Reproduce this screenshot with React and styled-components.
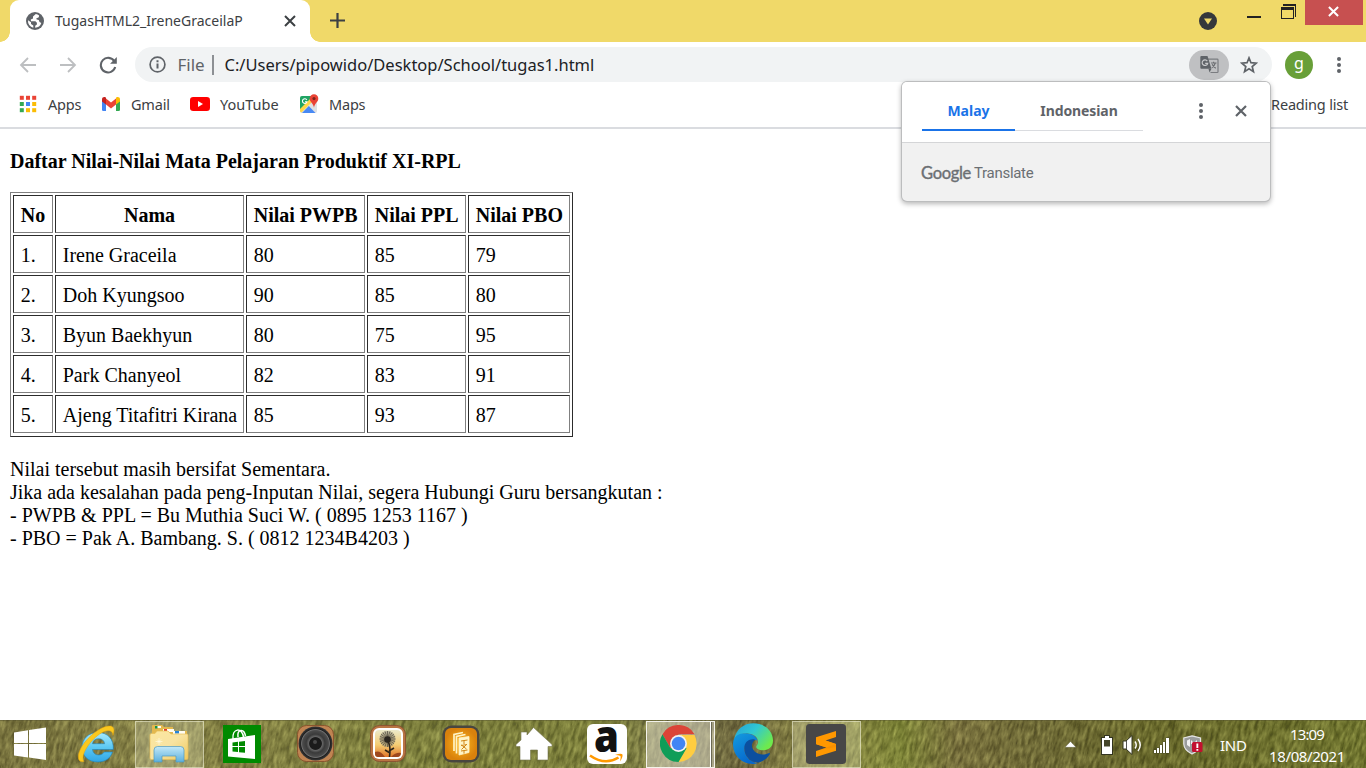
import React from "react";
import styled, { createGlobalStyle, css } from "styled-components";

const Global = createGlobalStyle`
  * { box-sizing: border-box; }
  html, body { margin: 0; padding: 0; overflow: hidden; background: #fff; }
  svg { display: block; flex: none; }
`;

const ui = css`
  font-family: "Noto Sans", "Open Sans", sans-serif;
  white-space: nowrap;
`;

const Screen = styled.div`
  width: 1366px;
  height: 768px;
  display: flex;
  flex-direction: column;
  position: relative;
  background: #fff;
  overflow: hidden;
`;

const Label = styled.span`
  ${ui}
  display: block;
  font-size: ${(p) => p.$size || 14.5}px;
  letter-spacing: ${(p) => p.$track || 0}px;
  color: ${(p) => p.$color || "#3c4043"};
  font-weight: ${(p) => p.$weight || 400};
  width: ${(p) => (p.$w ? p.$w + "px" : "auto")};
  line-height: 20px;
  flex: none;
`;

/* Tab strip */
const TabStrip = styled.header`
  height: 42px;
  flex: none;
  display: flex;
  background: #f0d969;
  padding-left: 10px;
`;
const Tab = styled.div`
  position: relative;
  width: 300px;
  height: 42px;
  display: flex;
  align-items: center;
  padding: 0 14px 0 16px;
  background: #fff;
  border-radius: 9px 9px 0 0;
  &::before, &::after {
    content: "";
    position: absolute;
    bottom: 0;
    width: 10px;
    height: 10px;
  }
  &::before { left: -10px; background: radial-gradient(circle at 0 0, transparent 9.5px, #fff 10px); }
  &::after { right: -10px; background: radial-gradient(circle at 100% 0, transparent 9.5px, #fff 10px); }
`;
const TabTitle = styled.div`
  flex: 1;
  padding-left: 11px;
`;
const NewTab = styled.div`
  padding: 13px 0 0 20px;
  flex: 1;
`;
const WindowControls = styled.div`
  display: flex;
  align-items: flex-start;
  width: 167px;
`;
const Slot = styled.div`
  width: ${(p) => p.$w}px;
  padding-top: ${(p) => p.$top || 0}px;
  flex: none;
`;
const CloseWindow = styled.div`
  width: 58px;
  height: 25px;
  display: flex;
  align-items: center;
  justify-content: center;
  padding: 0 2px 2px 0;
  background: #c75050;
  flex: none;
`;

/* Toolbar */
const Toolbar = styled.div`
  height: 40px;
  flex: none;
  padding-top: 5px;
  display: flex;
  align-items: center;
`;
const NavButtons = styled.div`
  width: 135px;
  display: flex;
  align-items: center;
  padding-left: 18.5px;
  gap: 22px;
`;
const Omnibox = styled.div`
  width: 1137px;
  height: 35px;
  border-radius: 18px;
  background: #f1f3f4;
  display: flex;
  align-items: center;
  padding: 0 14px 0 14px;
`;
const Divider = styled.div`
  width: 1.5px;
  height: 20px;
  background: #8d9094;
  margin: 0 11px 0 8px;
`;
const Spacer = styled.div`
  flex: 1;
`;
const TranslateChip = styled.div`
  width: 40px;
  height: 30px;
  border-radius: 15px;
  background: #bfc0c2;
  display: flex;
  align-items: center;
  justify-content: center;
  margin-right: 11px;
`;
const Avatar = styled.div`
  ${ui}
  width: 28px;
  height: 28px;
  border-radius: 50%;
  background: #689f38;
  color: #fff;
  font-size: 16px;
  line-height: 25px;
  text-align: center;
  margin: 0 22.5px 0 13px;
`;

/* Bookmarks */
const Bookmarks = styled.nav`
  height: 47px;
  flex: none;
  display: flex;
  align-items: center;
  padding: 0 18px 2px 19px;
  border-bottom: 2px solid #dadce0;
`;
const Bookmark = styled.div`
  display: flex;
  align-items: center;
  width: ${(p) => p.$w}px;
  gap: ${(p) => p.$gap || 10}px;
`;

/* Translate popup */
const Popup = styled.aside`
  position: absolute;
  left: 902px;
  top: 82px;
  width: 368px;
  height: 119px;
  border-radius: 5px;
  background: #f1f1f1;
  overflow: hidden;
  box-shadow: 0 0 0 1px #bcbdbe, 0 2px 5px 1px rgba(0, 0, 0, 0.28);
`;
const PopupTop = styled.div`
  height: 61px;
  background: #fff;
  border-bottom: 1px solid #d4d5d7;
  display: flex;
  padding-left: 20px;
`;
const Lang = styled.div`
  width: ${(p) => p.$w}px;
  height: 49px;
  padding-top: 19px;
  display: flex;
  justify-content: center;
  border-bottom: ${(p) => (p.$active ? "2px solid #1a73e8" : "1px solid #dadce0")};
`;
const PopupIcons = styled.div`
  display: flex;
  gap: 31px;
  padding: 20px 0 0 54.5px;
`;
const PopupBrand = styled.div`
  display: flex;
  gap: 3px;
  padding: 20px 0 0 19px;
`;
const Brand = styled.span`
  font-family: ${(p) => p.$font};
  font-size: ${(p) => p.$size}px;
  letter-spacing: ${(p) => p.$track}px;
  font-weight: ${(p) => p.$weight};
  -webkit-text-stroke: ${(p) => p.$stroke || 0}px #6b6f73;
  line-height: 20px;
  color: #6b6f73;
`;

/* Document */
const Doc = styled.main`
  flex: 1;
  padding: 21px 10px 0;
  color: #000;
  font-family: "Liberation Serif", "Times New Roman", serif;
  font-size: 20px;
  line-height: 23px;
`;
const Heading = styled.h1`
  margin: 0 0 19px;
  font-size: 20px;
  line-height: 23px;
`;
const Table = styled.table`
  table-layout: fixed;
  width: 563px;
  height: 245px;
  border: 1px solid;
  border-color: #808080 #2c2c2c #2c2c2c #808080;
  border-collapse: separate;
  border-spacing: 2px;
  padding-bottom: 1px;
  margin-bottom: 21px;
`;
const cell = css`
  height: 38px;
  padding: 2px 0 0 6.75px;
  border: 1px solid;
  border-color: #2c2c2c #808080 #808080 #2c2c2c;
  text-align: left;
  white-space: nowrap;
  line-height: 23px;
`;
const Th = styled.th`
  ${cell}
  ${(p) => p.$center && "text-align: center; padding: 2px 0 0;"}
`;
const Td = styled.td`
  ${cell}
`;

/* Taskbar */
const Taskbar = styled.footer`
  height: 48px;
  flex: none;
  display: flex;
  position: relative;
  background: #716f36;
`;
const Grass = styled.svg`
  position: absolute;
  inset: 0;
`;
const TaskRow = styled.div`
  position: relative;
  display: flex;
  width: 100%;
`;
const StartButton = styled.div`
  width: 60px;
  padding: 7px 0 0 14px;
`;
const TaskCell = styled.div`
  width: 73px;
  display: flex;
  justify-content: center;
`;
const TaskButton = styled.div`
  width: 69px;
  height: 47px;
  margin-top: 1px;
  padding: 0 1px 2px 0;
  display: flex;
  align-items: center;
  justify-content: center;
  ${(p) =>
    p.$open &&
    css`
      background: rgba(236, 238, 200, 0.28);
      border: 1px solid rgba(240, 240, 215, 0.55);
    `}
`;
const StackButton = styled.div`
  width: 69px;
  height: 47px;
  margin-top: 1px;
  display: flex;
  background: rgba(225, 222, 205, 0.5);
  border: 1px solid #f3f2ea;
`;
const StackFront = styled.div`
  width: 64px;
  display: flex;
  align-items: center;
  justify-content: center;
  padding: 0 1px 2px 0;
  border-right: 1px solid #fff;
  box-shadow: 1px 0 0 #6a6852;
`;
const Tray = styled.div`
  display: flex;
  align-items: flex-start;
  margin-left: auto;
  width: 301px;
`;
const Clock = styled.div`
  width: 82px;
  display: flex;
  flex-direction: column;
  align-items: center;
  gap: 2px;
  padding-top: 4px;
`;

const Cross = ({ size, color, width = 2 }) => (
  <svg width={size} height={size} viewBox="0 0 12 12">
    <path d="M1 1L11 11M11 1L1 11" stroke={color} strokeWidth={width} fill="none" />
  </svg>
);
const Dots = ({ color = "#5f6368" }) => (
  <svg width="6" height="18" viewBox="0 0 6 18" fill={color}>
    <circle cx="3" cy="3" r="2" /><circle cx="3" cy="9" r="2" /><circle cx="3" cy="15" r="2" />
  </svg>
);
const Globe = () => (
  <svg width="18" height="18" viewBox="0 0 18 18">
    <circle cx="9" cy="9" r="9" fill="#5f6368" />
    <path d="M9.8 2 7 4.6v1.8L4.8 7.6l.2 1.7h4.4l1.5 1.5v1.7l-1.7 1.2v2.1A7 7 0 0 0 15.3 11l-1.8-.9-.7-2.2-2.1-.3-.5-1.2 2.6-1.2.3-1.8A7 7 0 0 0 9.8 2ZM2 8.2a7.1 7.1 0 0 0 5.3 7.6v-2.3L5 12.1v-1.8L2 8.2Z" fill="#fff" />
  </svg>
);
const Arrow = ({ flip }) => (
  <svg width="18" height="16" viewBox="0 0 18 16" transform={flip ? "scale(-1 1)" : undefined}>
    <path d="M17 8H2M9 1L2 8l7 7" fill="none" stroke="#bdbfc1" strokeWidth="1.8" />
  </svg>
);
const Reload = () => (
  <svg width="19" height="18" viewBox="0 0 19 18">
    <path d="M15.3 5.2A7.3 7.3 0 1 0 16.2 11" fill="none" stroke="#5f6368" strokeWidth="2.1" />
    <path d="M17.8 1v6.7h-6.7Z" fill="#5f6368" />
  </svg>
);
const Info = () => (
  <svg width="17" height="17" viewBox="0 0 17 17">
    <circle cx="8.5" cy="8.5" r="7.4" fill="none" stroke="#5f6368" strokeWidth="1.7" />
    <path d="M7.5 7.5h2v5h-2zM7.5 4.2h2v2h-2z" fill="#5f6368" />
  </svg>
);
const TranslateIcon = () => (
  <svg width="19" height="19" viewBox="0 0 19 19">
    <path d="M8 4.2h9.2q.8 0 .8.8v11.7q0 .8-.8.8H10.5" fill="none" stroke="#7a7c80" strokeWidth="1.2" />
    <path d="M1.3 1h6.2l3.9 12.8H1.3Q.3 13.8.3 12.8V2Q.3 1 1.3 1Z" fill="#5f6368" />
    <path d="M8.5 13.8h3l-2 3.7Z" fill="#5f6368" />
    <path d="M7.3 6.1A2.8 2.8 0 1 0 7.7 8.3H5.2" fill="none" stroke="#c9cacc" strokeWidth="1.2" />
    <path d="M11 8h5.5M13.6 6.8V8M15.3 8q-.8 3-3.5 4.8M12.2 9.3q1 2.5 3.6 4" fill="none" stroke="#6c6e72" strokeWidth="1.1" />
  </svg>
);
const Star = () => (
  <svg width="18" height="18" viewBox="0 0 18 18">
    <path d="M9 1.9 10.95 6.7 16.2 7.1 12.2 10.5 13.45 15.6 9 12.85 4.55 15.6 5.8 10.5 1.8 7.1 7.05 6.7Z" fill="none" stroke="#5f6368" strokeWidth="1.7" />
  </svg>
);
const AppsGrid = () => {
  const colors = ["#ea4335", "#ea4335", "#ea4335", "#34a853", "#4285f4", "#fbbc04", "#34a853", "#fbbc04", "#fbbc04"];
  return (
    <svg width="18" height="18" viewBox="0 0 18 18">
      {colors.map((c, i) => (
        <rect key={i} x={0.8 + (i % 3) * 6.2} y={0.8 + Math.floor(i / 3) * 6.2} width="4" height="4" fill={c} />
      ))}
    </svg>
  );
};
const Gmail = () => (
  <svg width="18" height="14" viewBox="0 0 18 14">
    <path d="M0 3h4v11H1.3Q0 14 0 12.7Z" fill="#4285f4" />
    <path d="M14 3h4v9.7Q18 14 16.7 14H14Z" fill="#34a853" />
    <path d="M4 1.5 9 5.5 14 1.5V7.6L9 11.5 4 7.6Z" fill="#ea4335" />
    <path d="M0 2.2C0 .3 2.2-.6 3.7.5L4 .8v6.8L0 4.6Z" fill="#c5221f" />
    <path d="M18 2.2C18 .3 15.8-.6 14.3.5L14 .8v6.8l4-3Z" fill="#fbbc04" />
  </svg>
);
const YouTube = () => (
  <svg width="20" height="14" viewBox="0 0 20 14">
    <rect width="20" height="14" rx="3.2" fill="#f00" />
    <path d="M8 4v6l5-3Z" fill="#fff" />
  </svg>
);
const MapsIcon = () => (
  <svg width="19" height="19" viewBox="0 0 19 19">
    <rect x="0" y="2" width="17" height="17" rx="2" fill="#dfe1e3" />
    <path d="M2 2h12L0 16V4q0-2 2-2Z" fill="#1fa463" />
    <path d="M0 15 12.5 2.5l2.500 2.500L1.500 18.500Q0 18 0 17Z" fill="#ffd748" />
    <path d="M2 19l6.800-7L15.500 19Z" fill="#4889f4" />
    <path d="M6.8 6A2.300 2.300 0 1 0 7 7.700H5" stroke="#fff" fill="none" strokeWidth="1.1" />
    <path d="M14 .3a4.3 4.3 0 0 1 4.3 4.4c0 3.2-3.7 4.6-4.3 9-.6-4.400-4.300-5.800-4.300-9A4.300 4.300 0 0 1 14 .3Z" fill="#ea4335" />
    <circle cx="14" cy="4.6" r="1.6" fill="#7c241e" />
  </svg>
);

const Windows = () => (
  <svg width="32" height="34" viewBox="0 0 32 34" fill="#fff">
    <path d="M0 5.4 14 3.2V16H0ZM15 3 32 .5V16H15ZM0 17h14v13.4L0 28.5ZM15 17h17v16L15 30.6Z" />
  </svg>
);
const InternetExplorer = () => (
  <svg width="38" height="38" viewBox="0 0 38 38">
    <defs>
      <linearGradient id="ie" x1="0" y1="0" x2="0" y2="1">
        <stop offset="0" stopColor="#a9eafc" /><stop offset=".5" stopColor="#5cc8f3" /><stop offset="1" stopColor="#30a6e4" />
      </linearGradient>
    </defs>
    <path fillRule="evenodd" d="M36.3 24.5H15.5C16 28 18.5 30 21.5 30c2.5 0 4.5-1 5.7-3h8.3C33.5 33.5 28 37 21 37 11.5 37 5 31 5 22.5S11.5 7.5 21 7.5 37 14 36.3 24.5ZM15.5 18.7H27.6C27.2 15.5 25 13.7 21.6 13.7S16 15.5 15.5 18.7Z" fill="url(#ie)" stroke="#1d83bd" strokeWidth=".6" />
    <path d="M7 36.5C-1.5 38 0 27 8 17S27.5-.5 34.5 1.2C37.5 2.5 37.5 6 36 10.5 36 4 28.5 4 20 11S3 31 7 36.5Z" fill="#fbc81e" stroke="#e2a20e" strokeWidth=".5" />
  </svg>
);
const Folder = () => (
  <svg width="40" height="40" viewBox="0 0 40 40">
    <defs>
      <linearGradient id="fo" x1="0" y1="0" x2="1" y2="1">
        <stop offset="0" stopColor="#fbe7a0" /><stop offset=".5" stopColor="#f8e3a0" /><stop offset="1" stopColor="#efc95c" />
      </linearGradient>
      <linearGradient id="fb" x1="0" y1="0" x2="0" y2="1">
        <stop offset="0" stopColor="#c3e9f8" /><stop offset="1" stopColor="#5bafdd" />
      </linearGradient>
    </defs>
    <path d="M3 5V2q0-1 1-1h9l2 2h9v4h14V35H3Z" fill="#e3b84e" />
    <path d="M6 2h6v2H6M14 5h11v3H14M24 7h12v3H24" fill="#fffdf3" />
    <path d="M6 2h2.5v2.5H6" fill="#159447" /><path d="M15 5h3v2.5h-3" fill="#e13c2e" /><path d="M26 7h4v2.5h-4" fill="#2784d8" />
    <path d="M1 11q0-1.5 1.5-1.5H6L8 7h11l3 3h16q1 0 1 1V34q0 1.5-1.5 1.5h-35Q1 35.5 1 34Z" fill="url(#fo)" stroke="#e6be59" strokeWidth=".7" />
    <path d="M5 26q0-3.5 3.5-3.5h23q3.5 0 3.5 3.5V38H27V32H13v6H5Z" fill="url(#fb)" stroke="#4e98bf" strokeWidth=".7" />
    <path d="M10 14v7M6.5 17.5h7M8 15.5l4 4M12 15.5l-4 4" stroke="#fffbe1" strokeWidth=".7" />
  </svg>
);
const Store = () => (
  <svg width="38" height="38" viewBox="0 0 38 38">
    <path d="M0 0h38v38H0Z" fill="#008a00" />
    <path d="M10 14C9 3 19 2 20.5 12M15 12c-1-8 6-9 7.5-1" fill="none" stroke="#fff" strokeWidth="1.5" />
    <path d="M5 14 32 10V34L5 31.500Z" fill="#fff" />
    <path d="M9.5 17.5 15 16.8V21H9.5ZM16 16.7 22 16v5h-6ZM9.5 22H15v5l-5.5-.5ZM16 22h6v5.8L16 27.2Z" fill="#008a00" />
  </svg>
);
const SpeakerApp = () => (
  <svg width="37" height="37" viewBox="0 0 37 37">
    <defs>
      <radialGradient id="sp"><stop offset="0" stopColor="#161616" /><stop offset=".35" stopColor="#1d1d1d" /><stop offset=".4" stopColor="#666" /><stop offset=".55" stopColor="#3a3a3a" /><stop offset=".76" stopColor="#4b4b4b" /><stop offset=".82" stopColor="#6e6e6e" /><stop offset=".87" stopColor="#202020" /><stop offset="1" stopColor="#3a3a3a" /></radialGradient>
    </defs>
    <rect x=".5" y=".5" width="36" height="36" rx="9" fill="#c08452" stroke="#8a552e" />
    <circle cx="18.5" cy="18.5" r="17" fill="url(#sp)" />
    <circle cx="18.5" cy="18.5" r="5.5" fill="#1b1b1b" /><circle cx="18" cy="17" r="2" fill="#494949" />
  </svg>
);
const seeds = Array.from({ length: 20 }, (_, i) => (i * Math.PI) / 10);
const Dandelion = () => (
  <svg width="36" height="37" viewBox="0 0 36 37">
    <defs>
      <linearGradient id="da" x1="0" y1="0" x2="0" y2="1"><stop offset="0" stopColor="#eceacb" /><stop offset=".55" stopColor="#f5cd73" /><stop offset="1" stopColor="#df7429" /></linearGradient>
    </defs>
    <rect x=".5" y=".5" width="35" height="36" rx="9" fill="#b97443" stroke="#8b5532" />
    <rect x="3" y="3" width="30" height="31" rx="6" fill="#fff" />
    <rect x="5" y="5" width="26" height="27" rx="4" fill="url(#da)" />
    <circle cx="17.5" cy="14" r="8" fill="#8b8775" opacity=".55" />
    {seeds.map((a) => (
      <path key={a} d={`M17.5 14L${17.5 + 8 * Math.cos(a)} ${14 + 8 * Math.sin(a)}`} stroke="#4d493f" strokeWidth=".7" />
    ))}
    <circle cx="17.5" cy="14.5" r="3.3" fill="#29251f" />
    <path d="M18 16q3 6 1.5 16M19 26l5-3M20 28l-5-3" stroke="#2d2519" strokeWidth="1.6" fill="none" />
    <path d="M5 27q5-2 10 5H8q-3 0-3-3ZM21 32q5-5 10-4-.5 4-4 4Z" fill="#9d481f" />
  </svg>
);
const TextApp = () => (
  <svg width="38" height="38" viewBox="0 0 38 38">
    <defs><radialGradient id="tx"><stop offset="0" stopColor="#ffb91f" /><stop offset="1" stopColor="#d9810c" /></radialGradient></defs>
    <rect x=".5" y=".5" width="37" height="37" rx="9" fill="#49463f" />
    <rect x="3" y="3" width="32" height="32" rx="6" fill="url(#tx)" />
    <path d="M12 26V9.5l9-2M14.5 28.5V11.5l9-2" fill="none" stroke="#fff4c7" strokeWidth="1.7" />
    <path d="M17 13 27 11.5V27.5L17 30Z" fill="#fff4c7" stroke="#fff4c7" strokeWidth=".8" />
    <path d="M19 16l6.5-1M22 15.5v3.500M19 20.500l6-1M19.500 20l5 4M24.500 19.500l-5 5M19 26l6.500-1M22 25.500v3" stroke="#d18616" strokeWidth="1" />
  </svg>
);
const Home = () => (
  <svg width="38" height="34" viewBox="0 0 38 34">
    <path d="M18.5.5 37 17.5v2H33V33H22.5V23h-7V33H5V19.5H1v-2L6 13V5h6v3Z" fill="#fff" stroke="#777750" strokeWidth=".6" />
  </svg>
);
const AmazonTile = styled.svg`
  ${ui}
  border-radius: 6px;
  background: #fff;
  overflow: visible;
`;
const Amazon = () => (
  <AmazonTile width="40" height="40" viewBox="0 0 40 40">
    <text x="7" y="28" fontFamily="Open Sans" fontWeight="800" fontSize="45" textLength="25" lengthAdjust="spacingAndGlyphs" fill="#111">a</text>
    <path d="M3 31.5Q18 42 31.5 33.500" fill="none" stroke="#f90" strokeWidth="2.6" />
    <path d="M28 31q6-2 7.5-.5Q36 33 33 37.5q1-3.5.5-5.5-2-1-5.5-1Z" fill="#f90" />
  </AmazonTile>
);
const Chrome = () => (
  <svg width="37" height="37" viewBox="0 0 48 48">
    <path d="M3.2 12A24 24 0 0 1 44.8 12H24L13.6 30Z" fill="#db4437" />
    <path d="M44.8 13A24 24 0 0 1 24 48L34.4 30 24 13Z" fill="#ffcd40" />
    <path d="M3.2 12A24 24 0 0 0 24 48L34.4 30H13.6Z" fill="#0f9d58" />
    <circle cx="24" cy="24" r="11" fill="#f1f1f1" /><circle cx="24" cy="24" r="8.8" fill="#4285f4" />
  </svg>
);
const Edge = () => (
  <svg width="40" height="41" viewBox="0 0 40 41">
    <defs>
      <linearGradient id="ea" x1="0" y1="0" x2="1" y2=".6"><stop offset="0" stopColor="#249fd9" /><stop offset=".5" stopColor="#30c8d2" /><stop offset="1" stopColor="#6eea4d" /></linearGradient>
      <linearGradient id="eb" x1="0" y1="0" x2=".5" y2="1"><stop offset="0" stopColor="#149cdf" /><stop offset="1" stopColor="#0668cd" /></linearGradient>
    </defs>
    <path d="M1 17C3 6 11 .3 20.5.3 32 .3 40 8 40 17.5c0 6-4 9.7-9.5 9.7-4.3 0-7.3-1.7-7.3-3.3 0-1.4 1.8-2 1.8-5.4C25 14 20 10.5 13.5 10.5 7 10.5 3 13 1 17Z" fill="url(#ea)" />
    <path d="M0 20.5C.5 13 6 10.3 12 10.3c7 0 12 3.7 12.5 7.5C21 15.5 12.5 17 11.5 25c-.7 7 5 14 13 15.3-1.5.5-3 .6-4.5.6C8 40.9 0 32 0 20.5Z" fill="url(#eb)" />
    <path d="M20.5 16.2C14 16 11.3 20.5 11.3 25.5c0 8 7 14.8 14.5 14 4.7-1.2 8.4-4 11-8.2.5-1-.3-1.5-1.2-1C25 35 16.500 26 19.500 20c.3-1 1.500-2.800 3-3Z" fill="#0b4f9f" />
  </svg>
);
const Sublime = () => (
  <svg width="40" height="40" viewBox="0 0 40 40">
    <rect width="40" height="40" rx="3.5" fill="#474747" />
    <path d="M30 7 10 13.3V20L20.5 23.5 10 27V33L30 26.7V20L19.5 16.5 30 13Z" fill="#ff9800" />
    <path d="M10 20.2 30 26.5V20L19.5 16.5Z" fill="#ff9800" />
    <path d="M20.5 23.5 30 20v3L14 25.7Z" fill="#e98200" opacity=".3" />
  </svg>
);

const GrassField = () => (
  <Grass width="1366" height="48" viewBox="0 0 1366 48" preserveAspectRatio="none">
    <defs>
      <linearGradient id="gr" x1="0" x2="1">
        <stop offset="0" stopColor="#7c7440" /><stop offset=".12" stopColor="#8b8449" />
        <stop offset=".3" stopColor="#83853f" /><stop offset=".44" stopColor="#7f823b" />
        <stop offset=".5" stopColor="#898558" /><stop offset=".54" stopColor="#6f6540" />
        <stop offset=".6" stopColor="#938e49" /><stop offset=".66" stopColor="#838b38" />
        <stop offset=".7" stopColor="#7a6f3e" /><stop offset=".76" stopColor="#6f6836" />
        <stop offset=".84" stopColor="#696829" /><stop offset="1" stopColor="#70762c" />
      </linearGradient>
      <filter id="blades" x="0" y="0" width="100%" height="100%" colorInterpolationFilters="sRGB">
        <feTurbulence type="fractalNoise" baseFrequency=".3 .09" numOctaves="4" seed="8" />
        <feColorMatrix values="1.6 0 0 0 -.36  1.6 0 0 0 -.35  1.1 0 0 0 -.32  0 0 0 0 1" />
      </filter>
    </defs>
    <rect width="1366" height="48" fill="url(#gr)" />
    <rect x="-60" y="-10" width="1490" height="70" filter="url(#blades)" opacity=".26" transform="skewX(-12)" />
    <path d="M0 .5h1366" stroke="#4f4d2d" strokeOpacity=".4" />
  </Grass>
);

const columns = [
  ["No", 40, false],
  ["Nama", 189, true],
  ["Nilai PWPB", 119, false],
  ["Nilai PPL", 99, false],
  ["Nilai PBO", 102, false],
];
const rows = [
  ["1.", "Irene Graceila", 80, 85, 79],
  ["2.", "Doh Kyungsoo", 90, 85, 80],
  ["3.", "Byun Baekhyun", 80, 75, 95],
  ["4.", "Park Chanyeol", 82, 83, 91],
  ["5.", "Ajeng Titafitri Kirana", 85, 93, 87],
];

const TaskItem = ({ children, open }) => (
  <TaskCell><TaskButton $open={open}>{children}</TaskButton></TaskCell>
);

export default function App() {
  return (
    <Screen>
      <Global />
      <TabStrip>
        <Tab>
          <Globe />
          <TabTitle><Label $size={14}>TugasHTML2_IreneGraceilaP</Label></TabTitle>
          <Cross size={12} color="#3c4043" />
        </Tab>
        <NewTab>
          <svg width="15" height="15" viewBox="0 0 15 15"><path d="M7.5 0v15M0 7.5h15" stroke="#3c4043" strokeWidth="2.2" /></svg>
        </NewTab>
        <WindowControls>
          <Slot $w={48} $top={12}>
            <svg width="18" height="18" viewBox="0 0 18 18"><circle cx="9" cy="9" r="9" fill="#35383b" /><path d="M5 6.5h8L9 12.5Z" fill="#f0d969" /></svg>
          </Slot>
          <Slot $w={34} $top={16}><svg width="14" height="2"><path d="M0 0h14v2H0z" fill="#222" /></svg></Slot>
          <Slot $w={24} $top={4}>
            <svg width="15" height="15" viewBox="0 0 15 15">
              <path d="M2 0h13v13h-1V2H2Z" fill="#222" />
              <path d="M0 3h13v12H0ZM1 6v8h11V6Z" fillRule="evenodd" fill="#222" />
            </svg>
          </Slot>
          <CloseWindow><Cross size={11} color="#fff" width={2.2} /></CloseWindow>
        </WindowControls>
      </TabStrip>

      <Toolbar>
        <NavButtons><Arrow /><Arrow flip /><Reload /></NavButtons>
        <Omnibox>
          <Info />
          <Slot $w={11.5} />
          <Label $size={17} $color="#5f6368" $w={26.5}>File</Label>
          <Divider />
          <Label $size={16.5} $color="#202124">C:/Users/pipowido/Desktop/School/tugas1.html</Label>
          <Spacer />
          <TranslateChip><TranslateIcon /></TranslateChip>
          <Star />
        </Omnibox>
        <Avatar>g</Avatar>
        <Dots />
      </Toolbar>

      <Bookmarks>
        <Bookmark $w={83} $gap={11}><AppsGrid /><Label $track={-0.2}>Apps</Label></Bookmark>
        <Bookmark $w={88} $gap={11}><Gmail /><Label $track={-0.2}>Gmail</Label></Bookmark>
        <Bookmark $w={110}><YouTube /><Label>YouTube</Label></Bookmark>
        <Bookmark $w={70}><MapsIcon /><Label $track={-0.2}>Maps</Label></Bookmark>
        <Spacer />
        <Label $track={-0.2}>Reading list</Label>
      </Bookmarks>

      <Doc>
        <Heading>Daftar Nilai-Nilai Mata Pelajaran Produktif XI-RPL</Heading>
        <Table>
          <colgroup>{columns.map(([n, w]) => <col key={n} width={w} />)}</colgroup>
          <thead><tr>{columns.map(([n, , c]) => <Th key={n} $center={c}>{n}</Th>)}</tr></thead>
          <tbody>
            {rows.map((r) => <tr key={r[0]}>{r.map((v, i) => <Td key={i}>{v}</Td>)}</tr>)}
          </tbody>
        </Table>
        <div>Nilai tersebut masih bersifat Sementara.</div>
        <div>Jika ada kesalahan pada peng-Inputan Nilai, segera Hubungi Guru bersangkutan :</div>
        <div>- PWPB &amp; PPL = Bu Muthia Suci W. ( 0895 1253 1167 )</div>
        <div>- PBO = Pak A. Bambang. S. ( 0812 1234B4203 )</div>
      </Doc>

      <Taskbar>
        <GrassField />
        <TaskRow>
          <StartButton><Windows /></StartButton>
          <TaskItem><InternetExplorer /></TaskItem>
          <TaskItem open><Folder /></TaskItem>
          <TaskItem><Store /></TaskItem>
          <TaskItem><SpeakerApp /></TaskItem>
          <TaskItem><Dandelion /></TaskItem>
          <TaskItem><TextApp /></TaskItem>
          <TaskItem><Home /></TaskItem>
          <TaskItem><Amazon /></TaskItem>
          <TaskCell><StackButton><StackFront><Chrome /></StackFront></StackButton></TaskCell>
          <TaskItem><Edge /></TaskItem>
          <TaskItem open><Sublime /></TaskItem>
          <Tray>
            <Slot $w={36} $top={21}><svg width="11" height="7" viewBox="0 0 11 7"><path d="M0 6.300 5.500.5 11 6.300Z" fill="#fff" stroke="#444526" strokeWidth=".3" /></svg></Slot>
            <Slot $w={21} $top={15}>
              <svg width="12" height="20" viewBox="0 0 12 20">
                <path d="M3 0h6v2h3v18H0V2h3Z" fill="#33341f" />
                <path d="M4 1h4v2h3v16H1V3h3Z" fill="#fff" />
                <path d="M3 5h6v6.500H3Z" fill="#45462a" />
              </svg>
            </Slot>
            <Slot $w={31} $top={15}>
              <svg width="21" height="20" viewBox="0 0 21 20"><path d="M1 6h3l6-5.5v19L4 14H1Z" fill="#fff" stroke="#33341f" strokeWidth="1" /><path d="M4.5 6v8" stroke="#555" /><path d="M13 6.5q2.5 3.5 0 7M16 4q4.5 6 0 12" fill="none" stroke="#fff" strokeWidth="1.4" /></svg>
            </Slot>
            <Slot $w={30} $top={17}>
              <svg width="17" height="17" viewBox="0 0 17 17">
                <path d="M.5 12.5h3v4h-3zM3.5 10.5h3v6h-3zM6.5 7.5h3v9h-3zM9.5 4.5h3v12h-3zM12.5.5h4v16h-4z" fill="#3d3e22" opacity=".7" />
                <path d="M1 13h2v3H1zM4 11h2v5H4zM7 8h2v8H7zM10 5h2v11h-2zM13 1h3v15h-3z" fill="#fff" />
              </svg>
            </Slot>
            <Slot $w={37} $top={15}>
              <svg width="20" height="20" viewBox="0 0 20 20"><path d="M9 .8 17.5 3v6q0 6-8.5 10Q1 15 .8 9V3Z" fill="#9a9c9c" stroke="#e5e5e5" strokeWidth="1.2" /><path d="M4 5.5 7 4v8L4 10ZM8 5l3 3 3-3v4H8Z" fill="#f1f1f1" /><rect x="9" y="7" width="10.5" height="10" rx="1.5" fill="#c2102f" /><path d="M13.4 8.5h1.9v4.5h-1.9zM13.4 14h1.9v1.7h-1.9z" fill="#fff" /></svg>
            </Slot>
            <Slot $w={46} $top={15}><Label $size={15} $color="#fff" $track={-0.3}>IND</Label></Slot>
            <Clock><Label $size={15} $color="#fff" $track={-0.9}>13:09</Label><Label $size={15} $color="#fff" $track={-0.4}>18/08/2021</Label></Clock>
          </Tray>
        </TaskRow>
      </Taskbar>

      <Popup>
        <PopupTop>
          <Lang $w={93} $active><Label $size={14} $weight={700} $color="#1a73e8">Malay</Label></Lang>
          <Lang $w={128}><Label $size={14} $weight={700} $color="#5f6368" $track={-0.1}>Indonesian</Label></Lang>
          <PopupIcons><Dots /><Slot $w={12} $top={3}><Cross size={12} color="#5f6368" width={2.2} /></Slot></PopupIcons>
        </PopupTop>
        <PopupBrand>
          <Brand $font='"Lato", sans-serif' $size={16.5} $track={-0.3} $weight={400} $stroke={0.4}>Google</Brand>
          <Brand $font='Roboto, sans-serif' $size={15} $track={-0.3} $weight={400}>Translate</Brand>
        </PopupBrand>
      </Popup>
    </Screen>
  );
}
